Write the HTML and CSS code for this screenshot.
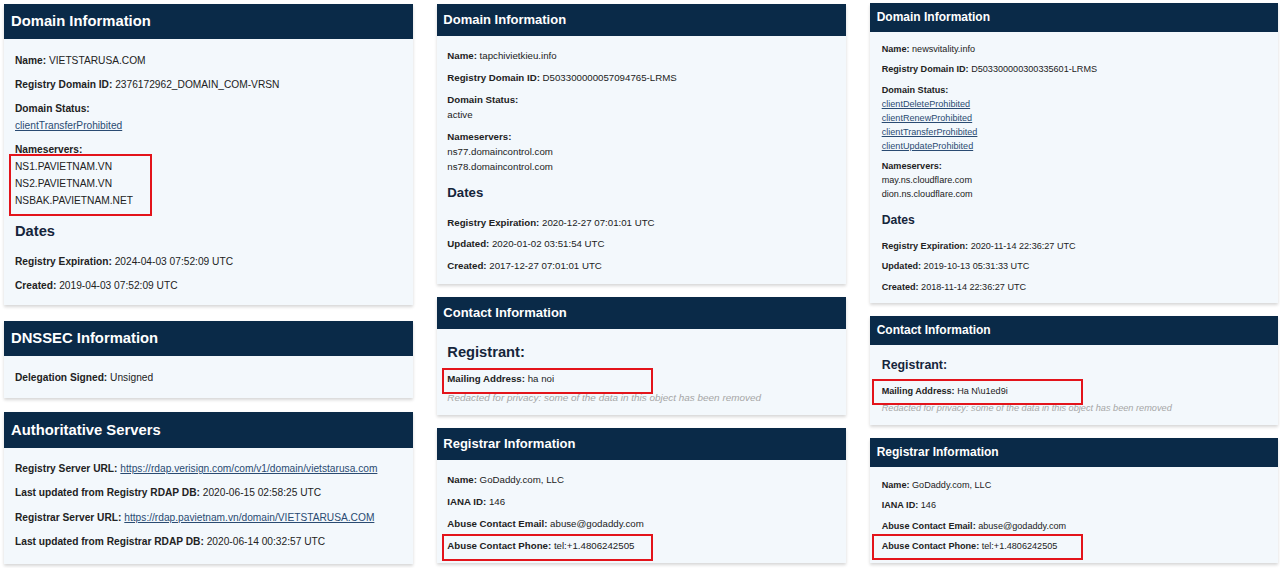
FILE: index.html
```html
<!DOCTYPE html>
<html lang="en">
<head>
<meta charset="utf-8">
<title>RDAP lookup comparison</title>
<link rel="stylesheet" href="styles.css">
</head>
<body>
<div class="page">
  <div class="col c1">
    <section class="card">
      <h2 class="head">Domain Information</h2>
      <div class="body b-dom">
        <div class="row"><b>Name:</b> VIETSTARUSA.COM</div>
        <div class="row"><b>Registry Domain ID:</b> 2376172962_DOMAIN_COM-VRSN</div>
        <div class="row"><div><b>Domain Status:</b></div><div><a href="#">clientTransferProhibited</a></div></div>
        <div class="row"><div><b>Nameservers:</b></div>
          <div class="boxed ns-box"><div>NS1.PAVIETNAM.VN</div><div>NS2.PAVIETNAM.VN</div><div>NSBAK.PAVIETNAM.NET</div></div>
        </div>
        <h3 class="sub">Dates</h3>
        <div class="row"><b>Registry Expiration:</b> 2024-04-03 07:52:09 UTC</div>
        <div class="row"><b>Created:</b> 2019-04-03 07:52:09 UTC</div>
      </div>
    </section>
    <section class="card card-2">
      <h2 class="head">DNSSEC Information</h2>
      <div class="body b-dnssec">
        <div class="row"><b>Delegation Signed:</b> Unsigned</div>
      </div>
    </section>
    <section class="card card-3">
      <h2 class="head head-3">Authoritative Servers</h2>
      <div class="body b-auth">
        <div class="row"><b>Registry Server URL:</b> <a href="#">https://rdap.verisign.com/com/v1/domain/vietstarusa.com</a></div>
        <div class="row"><b>Last updated from Registry RDAP DB:</b> 2020-06-15 02:58:25 UTC</div>
        <div class="row"><b>Registrar Server URL:</b> <a href="#">https://rdap.pavietnam.vn/domain/VIETSTARUSA.COM</a></div>
        <div class="row"><b>Last updated from Registrar RDAP DB:</b> 2020-06-14 00:32:57 UTC</div>
      </div>
    </section>
  </div>

  <div class="col c2">
    <section class="card">
      <h2 class="head">Domain Information</h2>
      <div class="body b-dom">
        <div class="row"><b>Name:</b> tapchivietkieu.info</div>
        <div class="row"><b>Registry Domain ID:</b> D503300000057094765-LRMS</div>
        <div class="row"><div><b>Domain Status:</b></div><div>active</div></div>
        <div class="row"><div><b>Nameservers:</b></div><div>ns77.domaincontrol.com</div><div>ns78.domaincontrol.com</div></div>
        <h3 class="sub">Dates</h3>
        <div class="row"><b>Registry Expiration:</b> 2020-12-27 07:01:01 UTC</div>
        <div class="row"><b>Updated:</b> 2020-01-02 03:51:54 UTC</div>
        <div class="row"><b>Created:</b> 2017-12-27 07:01:01 UTC</div>
      </div>
    </section>
    <section class="card card-2">
      <h2 class="head">Contact Information</h2>
      <div class="body b-contact">
        <h3 class="sub reg">Registrant:</h3>
        <div class="row boxed line-box"><b>Mailing Address:</b> ha noi</div>
        <div class="redacted">Redacted for privacy: some of the data in this object has been removed</div>
      </div>
    </section>
    <section class="card card-3">
      <h2 class="head">Registrar Information</h2>
      <div class="body b-registrar">
        <div class="row"><b>Name:</b> GoDaddy.com, LLC</div>
        <div class="row"><b>IANA ID:</b> 146</div>
        <div class="row"><b>Abuse Contact Email:</b> abuse@godaddy.com</div>
        <div class="row boxed line-box"><b>Abuse Contact Phone:</b> tel:+1.4806242505</div>
      </div>
    </section>
  </div>

  <div class="col c3">
    <section class="card">
      <h2 class="head">Domain Information</h2>
      <div class="body b-dom">
        <div class="row"><b>Name:</b> newsvitality.info</div>
        <div class="row"><b>Registry Domain ID:</b> D503300000300335601-LRMS</div>
        <div class="row"><div><b>Domain Status:</b></div>
          <div><a href="#">clientDeleteProhibited</a></div>
          <div><a href="#">clientRenewProhibited</a></div>
          <div><a href="#">clientTransferProhibited</a></div>
          <div><a href="#">clientUpdateProhibited</a></div>
        </div>
        <div class="row"><div><b>Nameservers:</b></div><div>may.ns.cloudflare.com</div><div>dion.ns.cloudflare.com</div></div>
        <h3 class="sub">Dates</h3>
        <div class="row"><b>Registry Expiration:</b> 2020-11-14 22:36:27 UTC</div>
        <div class="row"><b>Updated:</b> 2019-10-13 05:31:33 UTC</div>
        <div class="row"><b>Created:</b> 2018-11-14 22:36:27 UTC</div>
      </div>
    </section>
    <section class="card card-2">
      <h2 class="head">Contact Information</h2>
      <div class="body b-contact">
        <h3 class="sub reg">Registrant:</h3>
        <div class="row boxed line-box"><b>Mailing Address:</b> Ha N\u1ed9i</div>
        <div class="redacted">Redacted for privacy: some of the data in this object has been removed</div>
      </div>
    </section>
    <section class="card card-3">
      <h2 class="head">Registrar Information</h2>
      <div class="body b-registrar">
        <div class="row"><b>Name:</b> GoDaddy.com, LLC</div>
        <div class="row"><b>IANA ID:</b> 146</div>
        <div class="row"><b>Abuse Contact Email:</b> abuse@godaddy.com</div>
        <div class="row boxed line-box"><b>Abuse Contact Phone:</b> tel:+1.4806242505</div>
      </div>
    </section>
  </div>
</div>
</body>
</html>
```

FILE: styles.css
```css
* { box-sizing: border-box; }
html, body { margin: 0; padding: 0; background: #ffffff; }
body {
  font-family: "Liberation Sans", Arial, sans-serif;
  color: #222222;
  width: 1280px;
  height: 568px;
  overflow: hidden;
}
.page {
  display: flex;
  align-items: flex-start;
  column-gap: 24px;
  padding-left: 4px;
}
.col { display: flex; flex-direction: column; }
.c1 { width: 409px; padding-top: 4px; }
.c2 { width: 409px; padding-top: 4px; }
.c3 { width: 408px; padding-top: 2.7px; }

.card {
  background: #f3f8fc;
  box-shadow: 0 2px 3px rgba(0, 0, 0, 0.16);
}
.head {
  margin: 0;
  background: #0a2a48;
  color: #ffffff;
  font-weight: bold;
}
.body { display: flex; flex-direction: column; }
.row { position: relative; }
.row + .row { margin-top: var(--gap); }
.row b { font-weight: bold; }
a { color: #2a4b72; text-decoration: underline; }
.sub {
  margin: 0;
  font-weight: bold;
  color: #15253b;
}
.redacted {
  font-style: italic;
  color: #a6a6a6;
}
.boxed { position: relative; }
.boxed::after {
  content: "";
  position: absolute;
  border: 2px solid #e3141b;
}

/* ---------- column 1 ---------- */
.c1 { --gap: 7px; font-size: 10.2px; line-height: 17px; }
.c1 .head { height: 35px; line-height: 35px; font-size: 14.8px; padding-left: 7px; }
.c1 .head-3 { height: 36px; line-height: 36px; }
.c1 .body { padding: 12.5px 11px 11.5px 11px; }
.c1 .sub { font-size: 14.7px; line-height: 20px; margin: 12.5px 0 11.5px; }
.c1 .card-2 { margin-top: 16px; }
.c1 .card-3 { margin-top: 14px; }
.c1 .b-dnssec { padding-top: 12.5px; padding-bottom: 12.5px; }
.c1 .b-auth { padding-top: 12px; padding-bottom: 14px; }
.c1 .b-auth .row + .row { margin-top: 7.4px; }
.c1 .ns-box::after { left: -6.5px; top: -3.5px; width: 139px; height: 57.7px; }

/* ---------- column 2 ---------- */
.c2 { --gap: 6.6px; font-size: 9.7px; line-height: 15.2px; }
.c2 .head { height: 32px; line-height: 32px; font-size: 13px; padding-left: 6.3px; }
.c2 .body { padding: 12.4px 10.3px 10.5px 10.3px; }
.c2 .sub { font-size: 13.2px; line-height: 18px; margin: 9.7px 0 12.4px; }
.c2 .card-2 { margin-top: 13.3px; }
.c2 .card-2 .head, .c2 .card-3 .head { height: 31.7px; line-height: 31.7px; }
.c2 .card-3 { margin-top: 13.3px; }
.c2 .b-contact { padding-top: 12.7px; padding-bottom: 9.7px; }
.c2 .sub.reg { font-size: 14.7px; line-height: 20px; margin: 0 0 9.7px; }
.c2 .redacted { margin-top: 3.5px; font-size: 9.95px; }
.c2 .b-registrar { padding-top: 12.4px; padding-bottom: 10px; }
.c2 .line-box::after { left: -5.6px; top: -3.5px; width: 207px; height: 22.5px; }

/* ---------- column 3 ---------- */
.c3 { --gap: 6.5px; font-size: 9.1px; line-height: 14px; }
.c3 .head { height: 29.6px; line-height: 29.6px; font-size: 12px; padding-left: 6.7px; }
.c3 .body { padding: 9.7px 11.7px 9px 11.7px; }
.c3 .sub { font-size: 12.2px; line-height: 17px; margin: 11px 0 9.2px; }
.c3 .card-2 { margin-top: 13.3px; }
.c3 .card-2 .head { height: 29px; line-height: 29px; }
.c3 .card-3 { margin-top: 12.7px; }
.c3 .b-contact { padding-top: 12.2px; padding-bottom: 9.7px; }
.c3 .sub.reg { font-size: 12.4px; line-height: 17px; margin: 0 0 10.1px; }
.c3 .redacted { margin-top: 3px; font-size: 9.2px; }
.c3 .b-registrar { padding-top: 10.7px; padding-bottom: 9.8px; }
.c3 .line-box::after { left: -9.4px; top: -5px; width: 207px; height: 22px; }
```
